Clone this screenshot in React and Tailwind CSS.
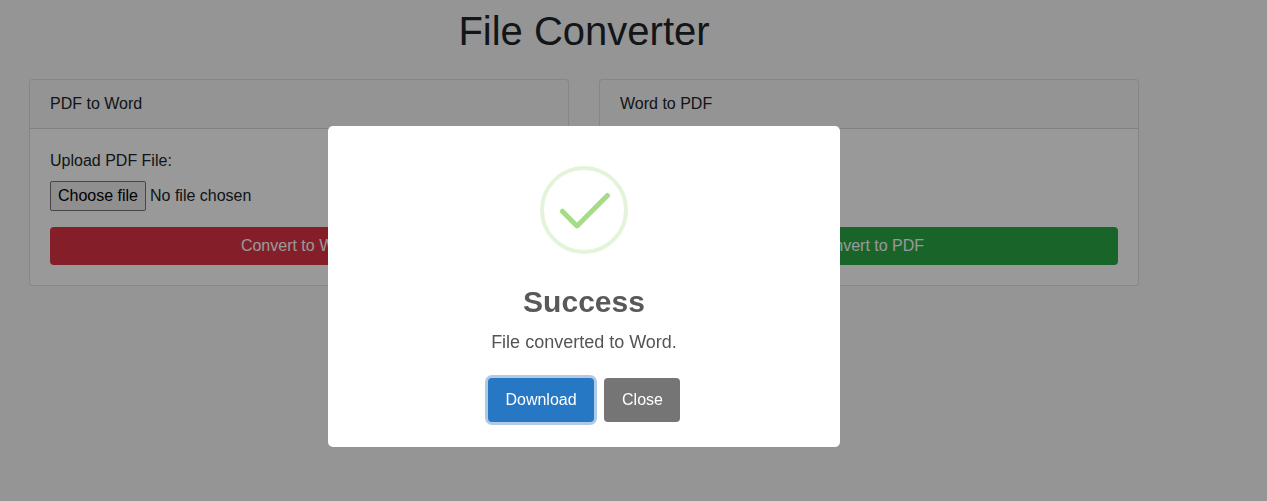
function ConverterCard({ title, label, action, color }) {
  return (
    <section className="w-[540px] rounded border border-black/[.125] bg-white">
      <header className="rounded-t-[3px] border-b border-black/[.125] bg-black/[.03] px-5 py-3">{title}</header>
      <div className="p-5">
        <p className="mb-2">{label}</p>
        <div className="mb-4 flex h-[30px] items-center gap-1">
          <button className="h-[30px] w-24 rounded-[2px] border border-[#767676] bg-[#efefef] text-black">Choose file</button>
          <span>No file chosen</span>
        </div>
        <button className={`block h-[38px] w-full rounded text-white ${color}`}>{action}</button>
      </div>
    </section>
  );
}

function SuccessIcon() {
  return (
    <svg className="h-[88px] w-[88px]" viewBox="0 0 88 88" fill="none">
      <circle cx="44" cy="44" r="42" stroke="#a5dc86" strokeOpacity=".3" strokeWidth="4" />
      <g fill="#a5dc86">
        <rect x="17" y="50" width="25" height="5" rx="2" transform="rotate(45 29.5 52.5)" />
        <rect x="29" y="42" width="47" height="5" rx="2" transform="rotate(-45 52.5 44.5)" />
      </g>
    </svg>
  );
}

export default function App() {
  return (
    <div className="h-screen overflow-hidden bg-[#f8f9fa] font-['Liberation_Sans',Arial,sans-serif] text-base text-[#212529]">
      <main className="ml-[29px] w-[1110px] pt-[7px]">
        <h1 className="mb-6 text-center text-[40px] leading-[48px] font-medium">File Converter</h1>
        <div className="flex gap-[30px]">
          <ConverterCard title="PDF to Word" label="Upload PDF File:" action="Convert to Word" color="bg-[#dc3545]" />
          <ConverterCard title="Word to PDF" label="Upload Word File:" action="Convert to PDF" color="bg-[#28a745]" />
        </div>
      </main>
      <div className="fixed inset-0 bg-black/40 pt-[126px] pl-[328px]">
        <div role="dialog" className="flex h-[321px] w-[512px] flex-col items-center rounded-[5px] bg-white pt-10 text-[#545454] will-change-transform">
          <SuccessIcon />
          <h2 className="mt-[30px] text-[30px] leading-9 font-semibold text-[#595959]">Success</h2>
          <p className="mt-[9px] text-lg leading-[27px]">File converted to Word.</p>
          <div className="mt-[22px] flex gap-2.5">
            <button className="h-11 w-[106px] rounded bg-[#2778c4] text-white shadow-[0_0_0_3px_rgba(100,150,200,0.5)]">Download</button>
            <button className="h-11 w-[76px] rounded bg-[#757575] pl-px text-white">Close</button>
          </div>
        </div>
      </div>
    </div>
  );
}
